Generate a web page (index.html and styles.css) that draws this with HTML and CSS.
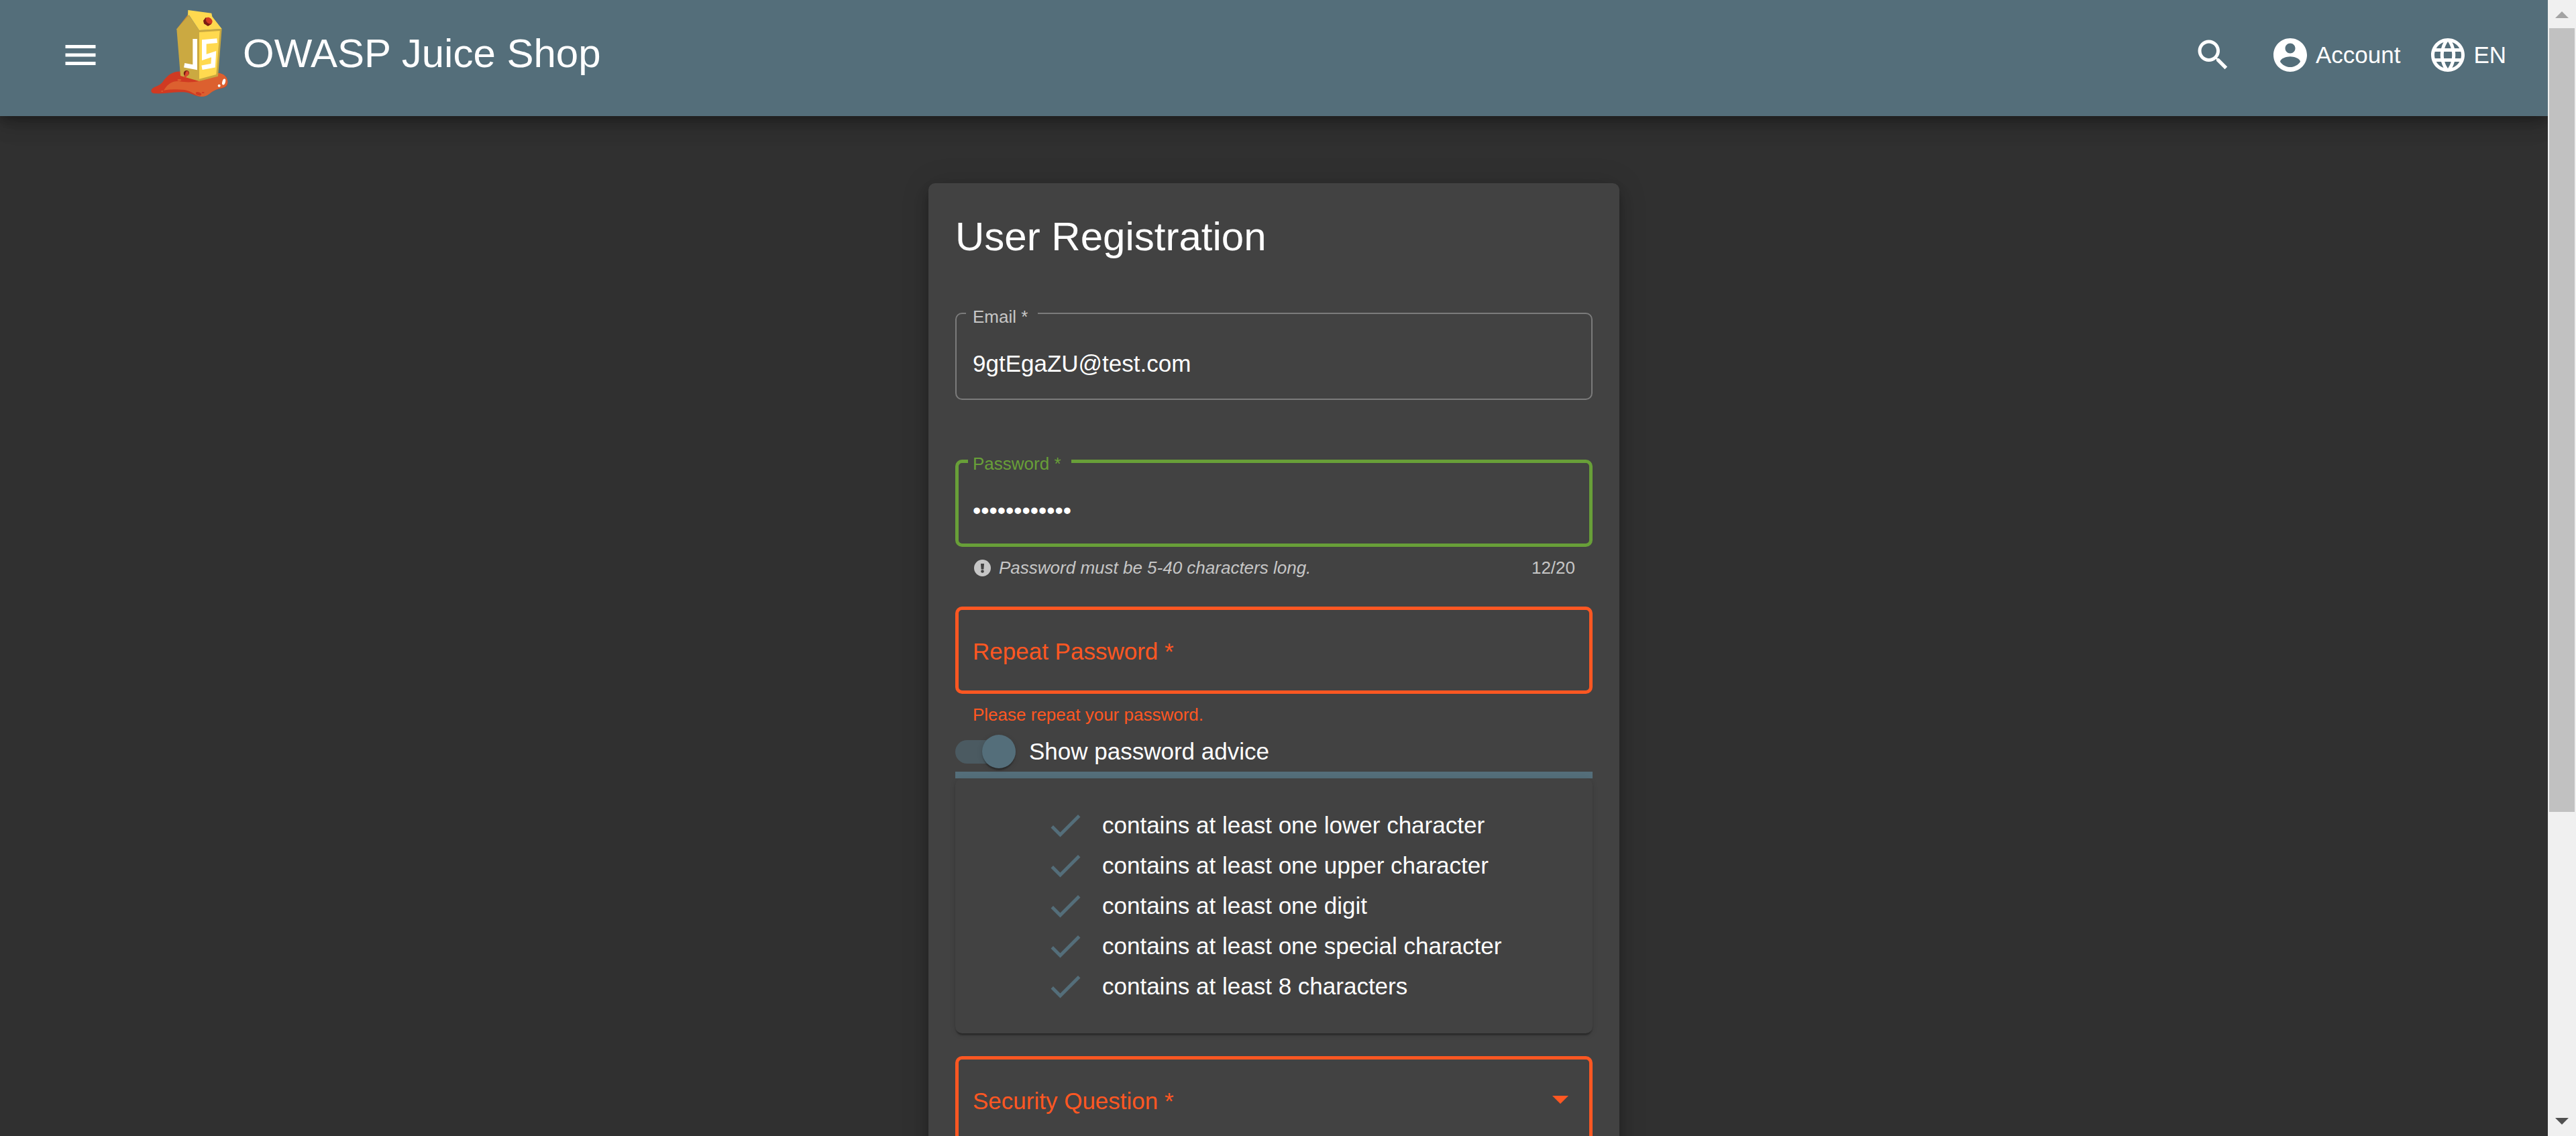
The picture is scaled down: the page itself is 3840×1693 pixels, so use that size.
FILE: index.html
```html
<!DOCTYPE html>
<html lang="en">
<head>
<meta charset="utf-8">
<meta name="viewport" content="width=device-width, initial-scale=1">
<title>OWASP Juice Shop</title>
<link rel="stylesheet" href="styles.css">
</head>
<body>
<div class="viewport">
  <div class="page">
    <header class="toolbar">
      <button class="toolbar__button" type="button" aria-label="Open menu">
        <svg class="icon" viewBox="0 0 24 24"><path d="M3 18h18v-2H3v2zm0-5h18v-2H3v2zm0-7v2h18V6H3z"/></svg>
      </button>
      <a class="brand" href="#">
        <svg class="brand__logo" viewBox="75 45 345 390" aria-hidden="true">
          <path fill="#d03a22" d="M79 398C88 386 108 388 126 368C148 336 172 318 210 320L372 326C402 328 419 346 418 370C416 394 394 394 370 400C340 408 335 430 300 432C270 432 256 414 222 412C180 411 130 420 95 418C77 417 72 408 79 398Z"/>
          <path fill="#dc602f" d="M132 404C146 382 166 360 200 363C240 371 270 366 296 362L376 326C403 328 420 348 418 370C414 394 392 391 366 401C338 411 334 432 300 432C272 428 262 408 226 402C190 397 160 400 132 404Z"/>
          <ellipse fill="#d03a22" cx="288" cy="419" rx="13" ry="7" transform="rotate(20 288 419)"/>
          <ellipse fill="#d03a22" cx="308" cy="414" rx="6" ry="3"/>
          <ellipse fill="#dc602f" cx="202" cy="358" rx="9" ry="4"/>
          <ellipse fill="#dc602f" cx="125" cy="408" rx="4" ry="3"/>
          <path fill="#c98c34" d="M240 66L190 130L243 80Z"/>
          <path fill="#cba941" d="M190 130L245 68L291 135V363L207 339Z"/>
          <path fill="#c9a83f" d="M291 135L392 129L375 341L291 363Z"/>
          <path fill="#ffd94f" d="M291 144L383 138L367 333L291 353Z"/>
          <path fill="#ffd94f" d="M241 45L346 59L349 74L392 129L291 135L245 67L240 72Z"/>
          <path fill="#7b1d14" d="M320 78L349 92L345 108L330 117L312 106L309 92Z"/>
          <ellipse fill="#d03a22" cx="335" cy="92" rx="17" ry="12" transform="rotate(45 335 92)"/>
          <path fill="#7b1d14" d="M223 335C218 322 226 315 235 315C246 316 249 328 242 335L228 345Z"/>
          <path fill="#d94a2c" d="M220 347C230 340 226 322 236 317C247 320 246 334 240 338C230 338 238 350 220 347Z"/>
          <polyline fill="none" stroke="#fff" stroke-width="20" points="272,174 272,301 224,292"/>
          <polyline fill="none" stroke="#fff" stroke-width="20" points="371,182 313,187 313,256 356,242 353,293 303,302"/>
          <ellipse fill="#fff" cx="401" cy="366" rx="7" ry="14" transform="rotate(15 401 366)"/>
          <circle fill="#fff" cx="380" cy="383" r="6"/>
        </svg>
        <span class="brand__name">OWASP Juice Shop</span>
      </a>
      <nav class="toolbar__actions">
        <button class="toolbar__button toolbar__button--search" type="button" aria-label="Search">
          <svg class="icon" viewBox="0 0 24 24"><path d="M15.5 14h-.79l-.28-.27C15.41 12.59 16 11.11 16 9.5 16 5.91 13.09 3 9.5 3S3 5.91 3 9.5 5.91 16 9.5 16c1.61 0 3.09-.59 4.23-1.57l.27.28v.79l5 4.99L20.49 19l-4.99-5zm-6 0C7.01 14 5 11.99 5 9.5S7.01 5 9.5 5 14 7.01 14 9.5 11.99 14 9.5 14z"/></svg>
        </button>
        <button class="toolbar__button" type="button">
          <svg class="icon" viewBox="0 0 24 24"><path d="M12 2C6.48 2 2 6.48 2 12s4.48 10 10 10 10-4.48 10-10S17.52 2 12 2zm0 3c1.66 0 3 1.34 3 3s-1.34 3-3 3-3-1.34-3-3 1.34-3 3-3zm0 14.2c-2.5 0-4.71-1.28-6-3.22.03-1.99 4-3.08 6-3.08 1.99 0 5.97 1.09 6 3.08-1.29 1.94-3.5 3.22-6 3.22z"/></svg>
          <span>Account</span>
        </button>
        <button class="toolbar__button" type="button">
          <svg class="icon" viewBox="0 0 24 24"><path d="M11.99 2C6.47 2 2 6.48 2 12s4.47 10 9.99 10C17.52 22 22 17.52 22 12S17.52 2 11.99 2zm6.93 6h-2.95c-.32-1.25-.78-2.45-1.38-3.56 1.84.63 3.37 1.91 4.33 3.56zM12 4.04c.83 1.2 1.48 2.53 1.91 3.96h-3.82c.43-1.43 1.08-2.76 1.91-3.96zM4.26 14C4.1 13.36 4 12.69 4 12s.1-1.36.26-2h3.38c-.08.66-.14 1.32-.14 2 0 .68.06 1.34.14 2H4.26zm.82 2h2.95c.32 1.25.78 2.45 1.38 3.56-1.84-.63-3.37-1.9-4.33-3.56zm2.95-8H5.08c.96-1.66 2.49-2.93 4.33-3.56C8.81 5.55 8.35 6.75 8.03 8zM12 19.96c-.83-1.2-1.48-2.53-1.91-3.96h3.82c-.43 1.43-1.08 2.76-1.91 3.96zM14.34 14H9.66c-.09-.66-.16-1.32-.16-2 0-.68.07-1.35.16-2h4.68c.09.65.16 1.32.16 2 0 .68-.07 1.34-.16 2zm.25 5.56c.6-1.11 1.06-2.31 1.38-3.56h2.95c-.96 1.65-2.49 2.93-4.33 3.56zM16.36 14c.08-.66.14-1.32.14-2 0-.68-.06-1.34-.14-2h3.38c.16.64.26 1.31.26 2s-.1 1.36-.26 2h-3.38z"/></svg>
          <span>EN</span>
        </button>
      </nav>
    </header>

    <main class="content">
      <form class="card">
        <h1 class="card__title">User Registration</h1>

        <div class="field">
          <label class="field__label" for="email">Email *</label>
          <input class="field__input" id="email" type="email" value="9gtEgaZU@test.com">
        </div>
        <div class="subscript"></div>

        <div class="field field--focused">
          <label class="field__label" for="password">Password *</label>
          <input class="field__input" id="password" type="password" value="abcdeFGH123!">
        </div>
        <div class="subscript">
          <div class="hint">
            <svg class="hint__icon" viewBox="0 0 25 25" aria-hidden="true"><circle cx="12.500" cy="12.500" r="12.500" fill="#c6c6c6"/><path fill="#424242" d="M10 6h5l-.6 8.500h-3.800z"/><circle cx="12.500" cy="17.500" r="2.300" fill="#424242"/></svg>
            <em>Password must be 5-40 characters long.</em>
            <span class="hint__count">12/20</span>
          </div>
        </div>

        <div class="field field--error">
          <label class="field__label field__label--resting" for="repeat">Repeat Password *</label>
          <input class="field__input" id="repeat" type="password">
        </div>
        <div class="hint hint--error">Please repeat your password.</div>

        <label class="toggle">
          <input class="toggle__input" type="checkbox" role="switch" checked>
          <span>Show password advice</span>
        </label>

        <div class="strength"></div>
        <ul class="advice">
          <li class="advice__item"><svg class="icon icon--check" viewBox="0 0 24 24"><path d="M9 16.200L4.800 12l-1.400 1.400L9 19 21 7l-1.400-1.400L9 16.200z"/></svg>contains at least one lower character</li>
          <li class="advice__item"><svg class="icon icon--check" viewBox="0 0 24 24"><path d="M9 16.200L4.800 12l-1.400 1.400L9 19 21 7l-1.400-1.400L9 16.200z"/></svg>contains at least one upper character</li>
          <li class="advice__item"><svg class="icon icon--check" viewBox="0 0 24 24"><path d="M9 16.200L4.800 12l-1.400 1.400L9 19 21 7l-1.400-1.400L9 16.200z"/></svg>contains at least one digit</li>
          <li class="advice__item"><svg class="icon icon--check" viewBox="0 0 24 24"><path d="M9 16.200L4.800 12l-1.400 1.400L9 19 21 7l-1.400-1.400L9 16.200z"/></svg>contains at least one special character</li>
          <li class="advice__item"><svg class="icon icon--check" viewBox="0 0 24 24"><path d="M9 16.200L4.800 12l-1.400 1.400L9 19 21 7l-1.400-1.400L9 16.200z"/></svg>contains at least 8 characters</li>
        </ul>

        <div class="field field--error">
          <label class="field__label field__label--resting" for="question">Security Question *</label>
          <select class="field__input" id="question"><option value=""></option></select>
          <svg class="field__arrow" viewBox="0 0 24 12" aria-hidden="true"><path d="M0 0h24L12 12z"/></svg>
        </div>
      </form>
    </main>
  </div>

  <div class="scrollbar" aria-hidden="true">
    <svg class="scrollbar__arrow" viewBox="0 0 42 42"><path fill="#a3a3a3" d="M11 27h20L21 17z"/></svg>
    <div class="scrollbar__track"><div class="scrollbar__thumb"></div></div>
    <svg class="scrollbar__arrow" viewBox="0 0 42 42"><path fill="#505050" d="M11 15h20L21 25z"/></svg>
  </div>
</div>
</body>
</html>
```

FILE: styles.css
```css
:root {
  --primary: #546e7a;
  --accent: #689f38;
  --warn: #ff5722;
  --page: #303030;
  --surface: #424242;
  --muted: #c6c6c6;
  --elevation-6: 0 8px 12px -2px rgba(0, 0, 0, .2), 0 15px 25px 0 rgba(0, 0, 0, .14), 0 2px 45px 0 rgba(0, 0, 0, .12);
  --elevation-1: 0 5px 2px -2px rgba(0, 0, 0, .2), 0 2px 2px 0 rgba(0, 0, 0, .14), 0 2px 8px 0 rgba(0, 0, 0, .12);
}

* {
  box-sizing: border-box;
}

body {
  margin: 0;
  background: var(--page);
  color: #fff;
  font: 35px/60px "Liberation Sans", Arial, sans-serif;
}

button,
input,
select {
  margin: 0;
  padding: 0;
  border: 0;
  background: none;
  color: inherit;
  font: inherit;
  outline: none;
  appearance: none;
}

.viewport {
  display: flex;
  height: 100vh;
  overflow: hidden;
}

.page {
  flex: 1;
  min-width: 0;
  overflow: hidden;
}

.icon {
  flex: none;
  width: 60px;
  height: 60px;
  fill: currentColor;
}

.icon--check {
  fill: var(--primary);
}

/* Toolbar */

.toolbar {
  display: flex;
  align-items: center;
  height: 173px;
  padding: 0 62px 10px 90px;
  background: var(--primary);
  box-shadow: var(--elevation-6);
}

.toolbar__button {
  display: flex;
  align-items: center;
  gap: 8px;
}

.toolbar__button--search {
  margin-right: 14px;
}

.toolbar__actions {
  display: flex;
  gap: 41px;
  margin-left: auto;
}

.brand {
  display: flex;
  align-items: center;
  gap: 22px;
  margin: 0 0 4px 75px;
  color: inherit;
  text-decoration: none;
}

.brand__logo {
  width: 115px;
  height: 130px;
}

.brand__name {
  font-size: 60px;
}

/* Registration card */

.content {
  display: flex;
  justify-content: center;
  padding: 100px 40px;
}

.card {
  width: 1030px;
  padding: 40px;
  border-radius: 10px;
  background: var(--surface);
  box-shadow: var(--elevation-6);
}

.card__title {
  margin: 0 0 73px;
  font-size: 60px;
  font-weight: 400;
  line-height: 80px;
}

.field {
  --edge: 2px;
  position: relative;
  height: 130px;
  border: var(--edge) solid #7b7b7b;
  border-radius: 10px;
}

.field--focused {
  --edge: 5px;
  border-color: var(--accent);
}

.field--error {
  --edge: 5px;
  border-color: var(--warn);
}

.field__label {
  position: absolute;
  top: calc(-9px - var(--edge));
  left: 14px;
  padding: 0 15px 0 calc(12px - var(--edge));
  background: var(--surface);
  color: var(--muted);
  font-size: 26px;
  line-height: 30px;
}

.field--focused .field__label {
  color: var(--accent);
}

.field .field__label--resting {
  top: 32px;
  color: var(--warn);
  font-size: 35px;
  line-height: 60px;
}

.field__input {
  display: block;
  width: 100%;
  height: 100%;
  padding: 22px calc(26px - var(--edge)) 0;
}

.field__arrow {
  position: absolute;
  top: 54px;
  right: 31px;
  width: 24px;
  height: 12px;
  fill: var(--warn);
}

.subscript {
  height: 89px;
}

.hint {
  display: flex;
  align-items: center;
  gap: 12px;
  height: 62px;
  padding: 0 26px 0 28px;
  color: var(--muted);
  font-size: 26px;
}

.hint--error {
  padding-left: 26px;
  color: var(--warn);
}

.hint__icon {
  width: 25px;
  height: 25px;
}

.hint__count {
  margin-left: auto;
}

/* Slide toggle */

.toggle {
  display: flex;
  align-items: center;
  gap: 20px;
  height: 48px;
  margin-bottom: 6px;
}

.toggle__input {
  position: relative;
  display: flex;
  align-items: center;
  width: 90px;
  height: 50px;
}

.toggle__input::before {
  content: "";
  width: 90px;
  height: 35px;
  border-radius: 18px;
  background: #4b5a61;
}

.toggle__input::after {
  content: "";
  position: absolute;
  right: 0;
  width: 50px;
  height: 50px;
  border-radius: 50%;
  background: var(--primary);
  box-shadow: var(--elevation-1);
}

/* Password advice */

.strength {
  height: 10px;
  background: var(--primary);
}

.advice {
  margin: 0 0 34px;
  padding: 40px 40px 40px 134px;
  border-radius: 10px;
  list-style: none;
  box-shadow: var(--elevation-1);
}

.advice__item {
  display: flex;
  align-items: center;
  gap: 25px;
  height: 60px;
}

/* Scrollbar */

.scrollbar {
  display: flex;
  flex-direction: column;
  width: 42px;
  background: #f0f0f0;
}

.scrollbar__arrow {
  width: 42px;
  height: 42px;
}

.scrollbar__track {
  flex: 1;
  padding: 0 2px;
}

.scrollbar__thumb {
  height: 72.6%;
  background: #c1c1c1;
}
```
